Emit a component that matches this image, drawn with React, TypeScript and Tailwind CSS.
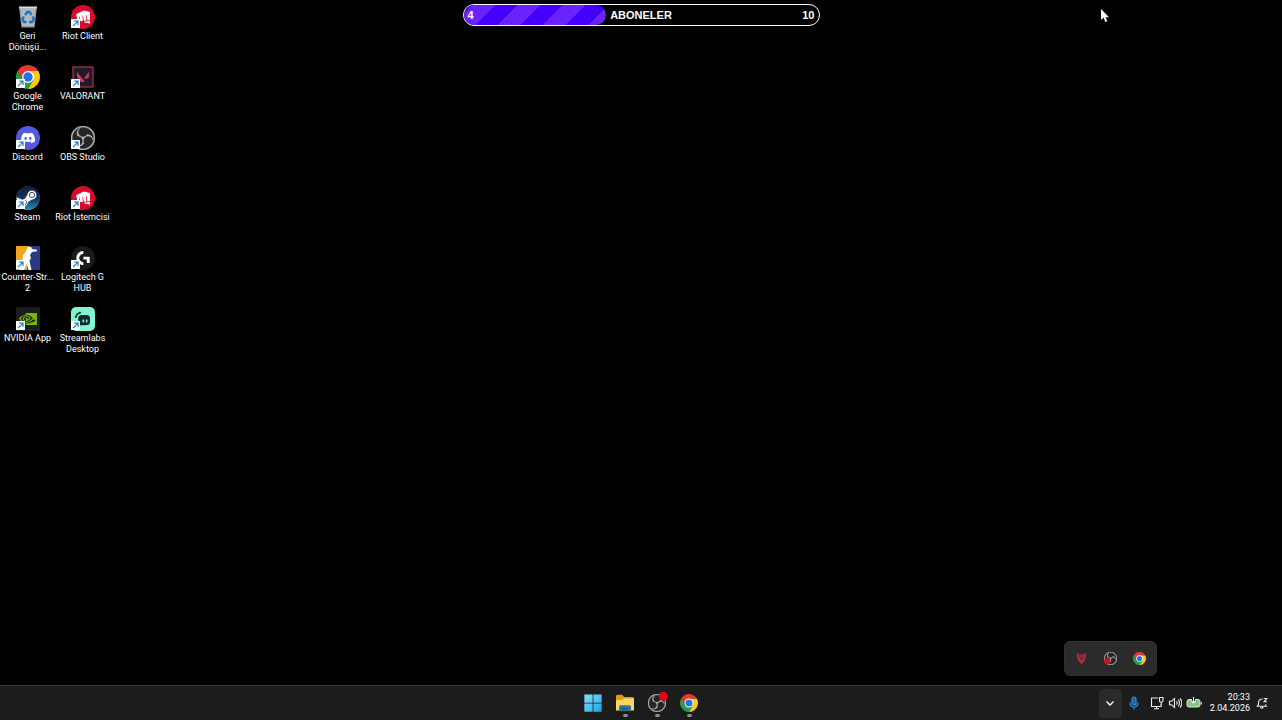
import type { ReactNode } from "react";
import { SiDiscord, SiNvidia, SiObsstudio, SiRiotgames, SiSteam, SiValorant, SiLogitechg, SiStreamlabs } from "react-icons/si";

function ShortcutArrow() {
  return (
    <g>
      <rect x="0" y="14" width="9" height="9" rx=".5" fill="#fff" />
      <path d="M2 21.200 6.600 16.600M3.300 16.200H7V20" fill="none" stroke="#1b7fc4" strokeWidth="1.200" />
    </g>
  );
}

function ChromeLogo() {
  return (
    <g>
      <path d="M22.390 6H12v6l5.200 3L12 24A12 12 0 0 0 22.390 6z" fill="#fdc912" />
      <path d="M12 6h10.390A12 12 0 0 0 1.610 6l5.200 9z" fill="#e8382c" />
      <path d="M1.610 6A12 12 0 0 0 12 24l5.200-9H6.800z" fill="#27a04b" />
      <circle cx="12" cy="12" r="6" fill="#fff" />
      <circle cx="12" cy="12" r="4.700" fill="#2273e6" />
    </g>
  );
}

function ObsLogo() {
  return (
    <g>
      <circle cx="12" cy="12" r="11" fill="#252427" />
      <SiObsstudio x="0" y="0" size={24} color="#b9b9bb" strokeWidth={0.500} />
    </g>
  );
}

const art: Record<string, ReactNode> = {
  bin: (
    <g>
      <path d="M3 2h18l-2.400 20.500H5.400z" fill="#94989c" />
      <path d="M4.500 4h15l-2 17h-11z" fill="#b5b9bc" />
      <path d="M3 1.500h18l-.3 2H3.300z" fill="#dadddf" />
      <path d="m9 10 2.300-3h2.400l1.800 3M16.500 11.500 18 14l-2 3h-3M10.500 17H8l-1.500-3L8 11.500" fill="none" stroke="#1277cd" strokeWidth="2.300" />
    </g>
  ),
  riot: (
    <g>
      <circle cx="12" cy="12" r="12" fill="#d9092b" />
      <SiRiotgames x="5" y="5" size={14} color="#fff" />
    </g>
  ),
  chrome: <ChromeLogo />,
  valorant: (
    <g>
      <rect x="2" y="2" width="20" height="20" fill="#211b29" stroke="#b52f51" strokeWidth="1.200" />
      <SiValorant x="6" y="6" size={12} color="#d33859" />
    </g>
  ),
  discord: (
    <g>
      <circle cx="12" cy="12" r="12" fill="#5558e0" />
      <SiDiscord x="5" y="5" size={14} color="#fff" />
    </g>
  ),
  obs: <ObsLogo />,
  steam: (
    <g>
      <defs>
        <linearGradient id="steam" x1="0" y1="0" x2="0" y2="1">
          <stop stopColor="#111d3a" />
          <stop offset=".55" stopColor="#123860" />
          <stop offset="1" stopColor="#2590c2" />
        </linearGradient>
      </defs>
      <circle cx="12" cy="12" r="11.500" fill="#fff" />
      <SiSteam x="0" y="0" size={24} fill="url(#steam)" />
    </g>
  ),
  cs: (
    <g>
      <path d="M0 0h13v24H0z" fill="#f1a51d" />
      <path d="M13 0h11v24H11z" fill="#293a83" />
      <path d="m12 1 3-.2 1 2.200 5 .7v1.500l-5 .8-2 3 1 3-1.500 3 2 9h-3l-2-6-2.500 6H3l3.500-10L7 9l3-4z" fill="#fff" />
    </g>
  ),
  logitech: (
    <g>
      <circle cx="12" cy="12" r="12" fill="#1a1a1b" />
      <SiLogitechg x="5" y="5" size={14} color="#fff" />
    </g>
  ),
  nvidia: (
    <g>
      <rect width="24" height="24" fill="#1c1c1e" />
      <SiNvidia x="3" y="3" size={18} color="#76b900" />
    </g>
  ),
  streamlabs: (
    <g>
      <rect width="24" height="24" rx="5" fill="#80f5d2" />
      <SiStreamlabs x="4" y="4" size={15} color="#0b2a2c" />
    </g>
  ),
};

const shortcuts = [
  { label: "Geri Dönüşü...", icon: "bin" },
  { label: "Google Chrome", icon: "chrome" },
  { label: "Discord", icon: "discord" },
  { label: "Steam", icon: "steam" },
  { label: "Counter-Str... 2", icon: "cs" },
  { label: "NVIDIA App", icon: "nvidia" },
  { label: "Riot Client", icon: "riot" },
  { label: "VALORANT", icon: "valorant" },
  { label: "OBS Studio", icon: "obs" },
  { label: "Riot İstemcisi", icon: "riot" },
  { label: "Logitech G HUB", icon: "logitech" },
  { label: "Streamlabs Desktop", icon: "streamlabs" },
];

function Shortcut({ label, icon }: { label: string; icon: string }) {
  return (
    <button type="button" className="flex w-[55px] flex-col items-center gap-0.5 pt-[5px] text-[9px] leading-[11px]">
      <svg viewBox="0 0 24 24" className="size-6 shrink-0" aria-hidden="true">
        {art[icon]}
        {icon !== "bin" && <ShortcutArrow />}
      </svg>
      <span className="text-center">{label}</span>
    </button>
  );
}

function GoalBar() {
  return (
    <section
      aria-label="ABONELER"
      className="relative flex h-[22px] w-[357px] items-center justify-between overflow-hidden rounded-full border border-white font-['Liberation_Sans',Arial,sans-serif] text-[11px] leading-4 font-bold"
    >
      <div className="absolute inset-y-0 left-0 w-2/5 rounded-r-full bg-[repeating-linear-gradient(135deg,#4400ff_0px,#4400ff_6px,#6a22ff_6px,#6a22ff_22px,#4400ff_22px,#4400ff_32px)]" />
      <span className="relative w-12 pl-1">4</span>
      <span className="relative">ABONELER</span>
      <span className="relative w-12 pr-1 text-right">10</span>
    </section>
  );
}

function TrayFlyout() {
  return (
    <div className="mr-[125px] mb-[9px] flex h-[35px] w-[93px] items-center justify-center gap-4 rounded-md border border-[#303030] bg-[#2b2b2b]">
      <button type="button" aria-label="Vanguard">
        <svg viewBox="0 0 24 24" className="size-[13px]">
          <path d="m4 2 4 2v6l4 5 4-5V4l4-2v8l-3 3h3l-8 10-8-10h3l-3-3z" fill="#ba2c3d" />
          <path d="m9 3 3 2 3-2v6l-3 4-3-4z" fill="#87303a" />
        </svg>
      </button>
      <button type="button" aria-label="OBS Studio">
        <svg viewBox="0 0 24 24" className="size-[13px]">
          <ObsLogo />
          <circle cx="6" cy="17" r="5.500" fill="#e00b13" />
        </svg>
      </button>
      <button type="button" aria-label="Google Chrome">
        <svg viewBox="0 0 24 24" className="size-[13px]">
          <ChromeLogo />
        </svg>
      </button>
    </div>
  );
}

function TaskButton({ label, running, children }: { label: string; running?: boolean; children: ReactNode }) {
  return (
    <button type="button" aria-label={label} className="flex w-8 flex-col items-center gap-0.5 pt-2">
      <svg viewBox="0 0 24 24" className="size-[18px] overflow-visible" aria-hidden="true">
        {children}
      </svg>
      {running && <span className="h-[3px] w-[5px] rounded-full bg-[#8a8a8a]" />}
    </button>
  );
}

function Taskbar() {
  return (
    <footer className="grid h-[35px] grid-cols-[1fr_auto_1fr] border-t border-[#343434] bg-[#1c1c1c]">
      <nav className="col-start-2 flex" aria-label="Görev çubuğu">
        <TaskButton label="Başlat">
          <defs>
            <linearGradient id="win" x1="0" y1="0" x2="1" y2="1">
              <stop stopColor="#8ae2fc" />
              <stop offset="1" stopColor="#19a5e8" />
            </linearGradient>
          </defs>
          <path d="M.5.500h11v11H.500zM12.500.500h11v11h-11zM.5 12.500h11v11H.500zM12.500 12.500h11v11h-11z" fill="url(#win)" />
        </TaskButton>
        <TaskButton label="Dosya Gezgini" running>
          <path d="M0 3a2 2 0 0 1 2-2h6l3 3h11a2 2 0 0 1 2 2v8H0z" fill="#dd9d16" />
          <path d="M0 8h8l3-2h13v16H0z" fill="#fcd65b" />
          <path d="M4 22v-5a2 2 0 0 1 2-2h12a2 2 0 0 1 2 2v5z" fill="#1b78b5" />
          <path d="M8 18.500h8V22H8z" fill="#155b8c" />
        </TaskButton>
        <TaskButton label="OBS Studio" running>
          <ObsLogo />
          <circle cx="20.500" cy="3" r="6" fill="#e30711" />
        </TaskButton>
        <TaskButton label="Google Chrome" running>
          <ChromeLogo />
        </TaskButton>
      </nav>
      <div className="flex items-center justify-end pr-3.5">
        <button type="button" aria-label="Gizli simgeler" className="mr-1.5 flex h-[29px] w-[23px] items-center justify-center rounded-sm bg-[#2a2a2a]">
          <svg viewBox="0 0 12 12" className="size-3" fill="none" stroke="#fff" strokeWidth="1.300">
            <path d="m2.500 4.500 3.500 3.500 3.500-3.500" />
          </svg>
        </button>
        <button type="button" aria-label="Mikrofon" className="mr-2.5">
          <svg viewBox="0 0 12 14" className="h-3.5 w-3" fill="none" stroke="#3191dc" strokeWidth="1.200">
            <rect x="4" y="1" width="4" height="8" rx="2" fill="#1e609b" />
            <path d="M2 6.500c0 6 8 6 8 0M6 11v2.500" />
          </svg>
        </button>
        <button type="button" aria-label="Ağ, ses ve pil" className="flex items-center gap-1">
          <svg viewBox="0 0 14 14" className="size-3.5" fill="none" stroke="#ededed" strokeWidth="1.100">
            <path d="M8 2H1.500v8.500H11V8M4 12.700h5M6.500 10.500v2.200M9.500 1.500h3.500v3a1.700 1.700 0 0 1-3.500 0zM11.200 6v4" />
          </svg>
          <svg viewBox="0 0 14 14" className="size-3.5" fill="none" stroke="#ededed" strokeWidth="1.100">
            <path d="M1.500 5.300h2l3-2.800v9l-3-2.800h-2zM8.500 5.300c.8 1 .8 2.400 0 3.400M10.200 3.700c1.600 2 1.600 4.600 0 6.600M12 2.300c2.200 2.800 2.200 6.600 0 9.400" />
          </svg>
          <svg viewBox="0 0 16 14" className="h-3.5 w-4" fill="none">
            <rect x="1" y="3.500" width="13" height="7.500" rx="2" fill="#83c783" stroke="#d9efd9" />
            <path d="M15.300 6v2.500" stroke="#d9efd9" />
            <path d="M7.500 1v4" stroke="#1c1c1c" strokeWidth="3" />
            <path d="M7.500 1v5.500M5.300 4.800l2.200 2.200 2.200-2.200" stroke="#fff" strokeWidth="1.100" />
          </svg>
        </button>
        <button type="button" className="ml-2 text-right text-[9px] leading-[11px]">
          <time className="flex flex-col" dateTime="2026-04-02T20:33">
            <span>20:33</span>
            <span>2.04.2026</span>
          </time>
        </button>
        <button type="button" aria-label="Bildirimler" className="ml-1.5">
          <svg viewBox="0 0 12 12" className="size-3" fill="none" stroke="#ededed" strokeWidth="1.100">
            <path d="M6.500 2C4 2 2.500 3.500 2.500 5.500v2L1.300 9.300h9L9.300 7.500M4.500 10c.3 1.500 2.200 1.500 2.600 0M7.800 1.500h3L8 4.800h3" />
          </svg>
        </button>
      </div>
    </footer>
  );
}

export default function App() {
  return (
    <div className="relative flex min-h-screen flex-col bg-black font-[Roboto,'Noto_Sans',sans-serif] text-white">
      <main className="grid flex-1 grid-cols-[1fr_auto_1fr]">
        <div className="grid h-[362px] w-[110px] grid-flow-col grid-cols-2 grid-rows-6">
          {shortcuts.map((item) => (
            <Shortcut key={item.label} {...item} />
          ))}
        </div>
        <div className="pt-1">
          <GoalBar />
        </div>
        <div className="flex items-end justify-end">
          <TrayFlyout />
        </div>
      </main>
      <Taskbar />
      <svg viewBox="0 0 10 15" className="absolute top-2 right-[172px] h-[15px] w-2.5" aria-hidden="true">
        <path d="M1 1v11l2.600-2.400L5.300 14l2-.8-1.800-4H9z" fill="#fff" />
      </svg>
    </div>
  );
}
